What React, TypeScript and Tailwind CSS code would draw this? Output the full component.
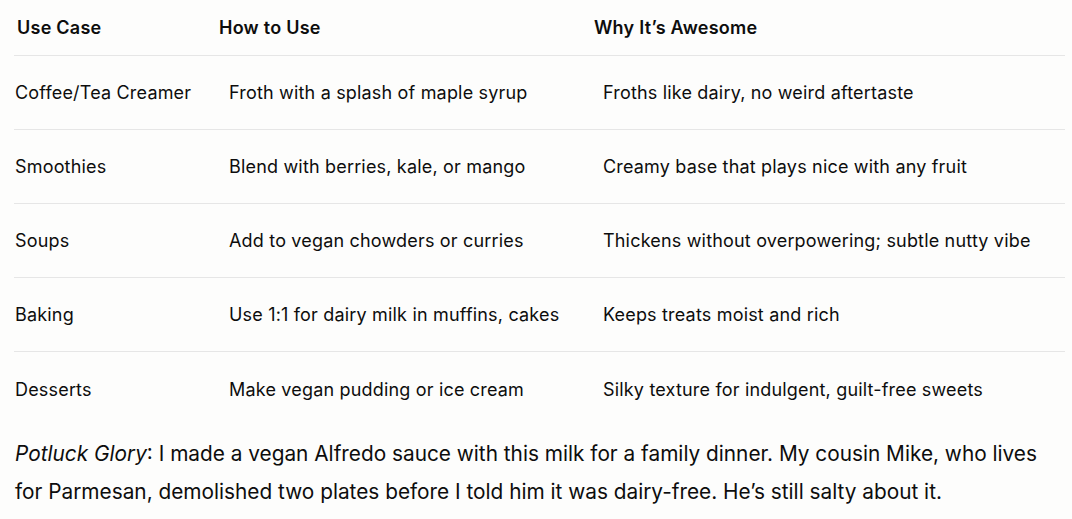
import React from 'react';

interface Row {
  useCase: string;
  how: string;
  why: string;
}

const rows: Row[] = [
  { useCase: 'Coffee/Tea Creamer', how: 'Froth with a splash of maple syrup', why: 'Froths like dairy, no weird aftertaste' },
  { useCase: 'Smoothies', how: 'Blend with berries, kale, or mango', why: 'Creamy base that plays nice with any fruit' },
  { useCase: 'Soups', how: 'Add to vegan chowders or curries', why: 'Thickens without overpowering; subtle nutty vibe' },
  { useCase: 'Baking', how: 'Use 1:1 for dairy milk in muffins, cakes', why: 'Keeps treats moist and rich' },
  { useCase: 'Desserts', how: 'Make vegan pudding or ice cream', why: 'Silky texture for indulgent, guilt-free sweets' },
];

export default function App() {
  return (
    <div
      className="min-h-[519px] w-[1072px] bg-[#fdfdfc] text-[#0d0d0d] pl-[14px] pr-[7px]"
      style={{ fontFamily: 'Inter, "Noto Sans", sans-serif' }}
    >
      {/* header */}
      <div className="grid grid-cols-[205px_375px_1fr] h-[56px] items-center border-b border-[#e6e6e6] text-[18px] font-semibold tracking-[0.25px]">
        <div className="pl-[3px]">Use Case</div>
        <div>How to Use</div>
        <div>Why It’s Awesome</div>
      </div>

      {rows.map((r, i) => (
        <div
          key={r.useCase}
          className={
            'grid grid-cols-[205px_375px_1fr] h-[74px] items-center text-[18px] tracking-[0.18px] ' +
            (i < rows.length - 1 ? 'border-b border-[#e6e6e6]' : '')
          }
        >
          <div className="pl-[1px]">{r.useCase}</div>
          <div className="pl-[10px]">{r.how}</div>
          <div className="pl-[9px]">{r.why}</div>
        </div>
      ))}

      <p className="mt-[9px] text-[20.8px] leading-[38px] pl-[1px] pr-[10px]">
        <em>Potluck Glory</em>: I made a vegan Alfredo sauce with this milk for a family dinner. My cousin Mike, who lives
        for Parmesan, demolished two plates before I told him it was dairy-free. He’s still salty about it.
      </p>
    </div>
  );
}
